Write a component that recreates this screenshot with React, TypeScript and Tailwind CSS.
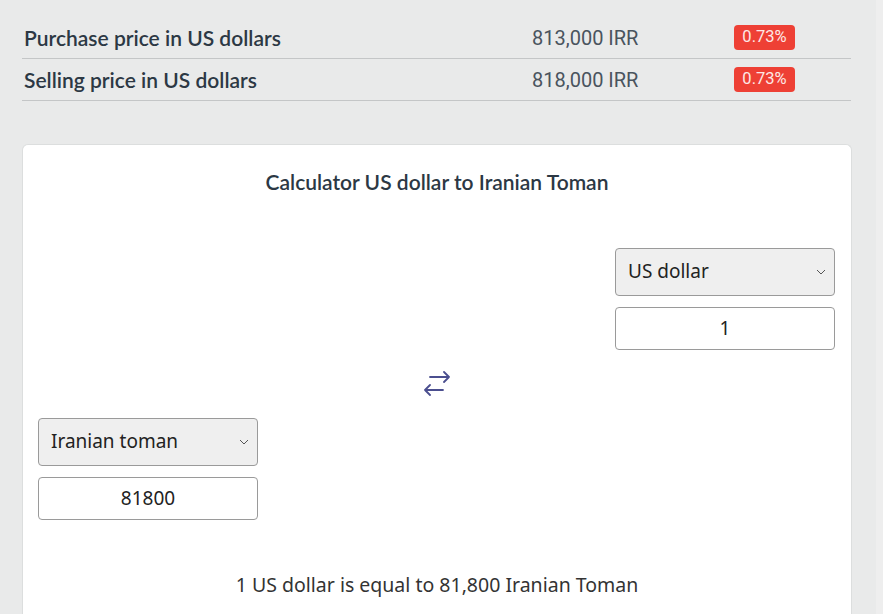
import { useState } from 'react';

const rates = [
  { label: 'Purchase price in US dollars', value: '813,000 IRR', change: '0.73%' },
  { label: 'Selling price in US dollars', value: '818,000 IRR', change: '0.73%' },
];

function Chevron() {
  return (
    <svg
      className="pointer-events-none absolute right-[9px] top-1/2 -translate-y-1/2"
      width="10"
      height="6"
      viewBox="0 0 10 6"
      fill="none"
      stroke="#555"
      strokeWidth="1"
    >
      <path d="M1 1l4 4 4-4" />
    </svg>
  );
}

function CurrencyBox({
  currency,
  options,
  amount,
  onCurrency,
  onAmount,
}: {
  currency: string;
  options: string[];
  amount: string;
  onCurrency: (v: string) => void;
  onAmount: (v: string) => void;
}) {
  return (
    <div className="flex w-[220px] flex-col gap-[11px]">
      <div className="relative">
        <select
          value={currency}
          onChange={(e) => onCurrency(e.target.value)}
          className="h-[48px] w-full appearance-none rounded-[4px] border border-[#9a9a9a] bg-[#efefef] pl-[12px] text-[19px] text-[#222] outline-none"
          style={{ fontFamily: '"Noto Sans", sans-serif' }}
        >
          {options.map((o) => (
            <option key={o}>{o}</option>
          ))}
        </select>
        <Chevron />
      </div>
      <input
        value={amount}
        onChange={(e) => onAmount(e.target.value)}
        className="h-[43px] w-full rounded-[4px] border border-[#9a9a9a] bg-white text-center text-[19px] text-[#222] outline-none"
        style={{ fontFamily: '"Noto Sans", sans-serif' }}
      />
    </div>
  );
}

export default function App() {
  const [from, setFrom] = useState('US dollar');
  const [to, setTo] = useState('Iranian toman');
  const [amount, setAmount] = useState('1');
  const result = String((Number(amount) || 0) * 81800);

  return (
    <div className="flex min-h-[614px] w-full bg-[#e9eaea]">
      <div className="w-[876px] pl-[22px] pt-[17px]">
        <div className="w-[829px]">
          {rates.map((r) => (
            <div key={r.label} className="flex h-[42px] items-center border-b border-[#c4c6c7] pl-[2px]">
              <div
                className="w-[508px] text-[21px] font-semibold text-[#2c3844]"
                style={{ fontFamily: 'Lato, sans-serif' }}
              >
                {r.label}
              </div>
              <div
                className="w-[202px] text-[20px] text-[#4a545e]"
                style={{ fontFamily: 'Roboto, sans-serif' }}
              >
                {r.value}
              </div>
              <span
                className="flex h-[25px] w-[61px] items-center justify-center rounded-[4px] bg-[#ee4035] text-[16.5px] text-[#fde8e6]"
                style={{ fontFamily: 'Roboto, sans-serif' }}
              >
                {r.change}
              </span>
            </div>
          ))}
        </div>

        <div className="mt-[43px] w-[830px] rounded-t-[6px] border border-b-0 border-[#dcdede] bg-white px-[15px] pt-[21px] pb-[18px]">
          <h2
            className="text-center text-[21px] font-semibold text-[#2c3844]"
            style={{ fontFamily: 'Lato, sans-serif' }}
          >
            Calculator US dollar to Iranian Toman
          </h2>

          <div className="mt-[50px] flex justify-end pr-[1px]">
            <CurrencyBox
              currency={from}
              options={['US dollar', 'Euro']}
              amount={amount}
              onCurrency={setFrom}
              onAmount={setAmount}
            />
          </div>

          <div className="mt-[21px] flex justify-center">
            <svg width="28" height="25" viewBox="0 0 28 25" fill="none" stroke="#4b4f8f" strokeWidth="1.8" strokeLinecap="round" strokeLinejoin="round">
              <path d="M7 6h19M21 1l5 5-5 5" />
              <path d="M20 19H2M7 14l-5 5 5 5" />
            </svg>
          </div>

          <div className="mt-[22px] flex justify-start">
            <CurrencyBox
              currency={to}
              options={['Iranian toman', 'Iranian rial']}
              amount={result}
              onCurrency={setTo}
              onAmount={() => {}}
            />
          </div>

          <p
            className="mt-[50px] text-center text-[19.5px] text-[#333]"
            style={{ fontFamily: '"Noto Sans", sans-serif' }}
          >
            {amount} US dollar is equal to {Number(result).toLocaleString('en-US')} Iranian Toman
          </p>
        </div>
      </div>
      <div className="flex-1 bg-[#eeeeee]" />
    </div>
  );
}
